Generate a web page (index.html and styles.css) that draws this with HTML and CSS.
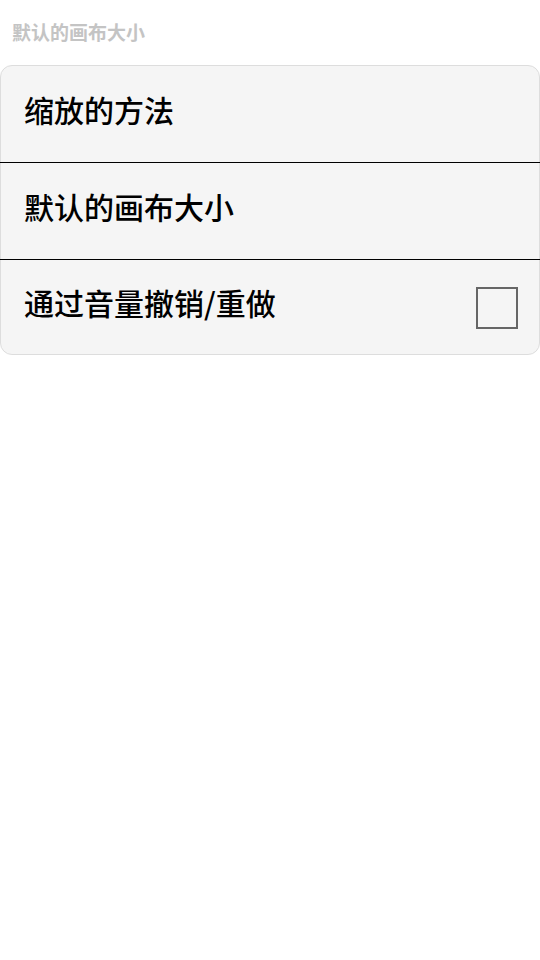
FILE: index.html
```html
<!DOCTYPE html>
<html lang="zh-CN">
<head>
<meta charset="utf-8">
<link rel="stylesheet" href="styles.css">
</head>
<body>
<div class="header">默认的画布大小</div>
<div class="card">
  <div class="row"><span class="label">缩放的方法</span></div>
  <div class="divider"></div>
  <div class="row"><span class="label">默认的画布大小</span></div>
  <div class="divider"></div>
  <div class="row last"><span class="label">通过音量撤销/重做</span><span class="checkbox"></span></div>
</div>
</body>
</html>
```
FILE: styles.css
```css
html, body {
  margin: 0;
  padding: 0;
  background: #ffffff;
  font-family: "Noto Sans CJK SC", "Noto Sans", sans-serif;
}
.header {
  height: 65px;
  display: flex;
  align-items: center;
  padding: 0 0 3px 12px;
  box-sizing: border-box;
  font-size: 19px;
  font-weight: 700;
  color: #c4c4c4;
}
.card {
  background: #f5f5f5;
  border: 1px solid #dddddd;
  border-radius: 12px;
}
.row {
  height: 96px;
  display: flex;
  align-items: center;
  justify-content: space-between;
  padding: 0 21px 0 23px;
  box-sizing: border-box;
}
.row.last {
  height: 94px;
}
.label {
  font-size: 30px;
  line-height: 40px;
  font-weight: 500;
  color: #000000;
  margin-top: -10px;
}
.divider {
  height: 1px;
  background: #000000;
  margin: 0 -1px;
}
.checkbox {
  width: 38px;
  height: 38px;
  border: 2px solid #666666;
  box-sizing: content-box;
  margin-top: 1px;
}
```
